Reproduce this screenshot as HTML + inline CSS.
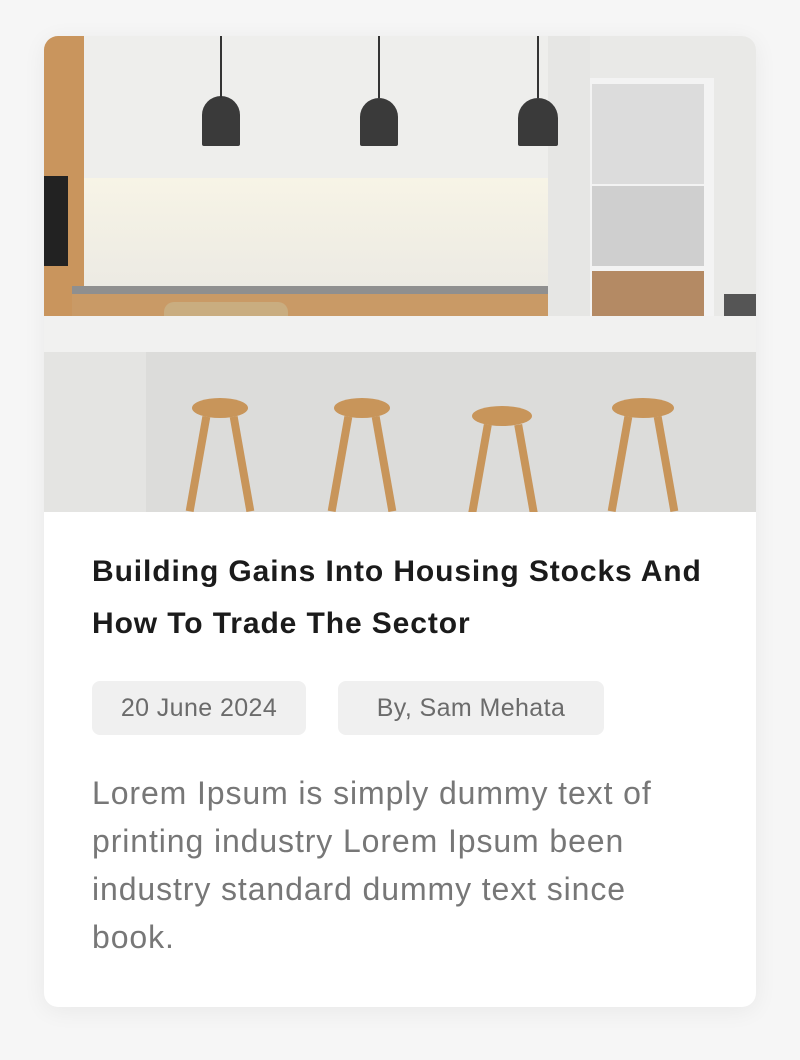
<!DOCTYPE html>
<html><head><style>
*{margin:0;padding:0;box-sizing:border-box}
body{width:800px;height:1060px;background:#f6f6f6;font-family:"Liberation Sans",sans-serif;position:relative;overflow:hidden}
.card{position:absolute;left:44px;top:36px;width:712px;height:971px;background:#fff;border-radius:14px;overflow:hidden;box-shadow:0 4px 24px rgba(0,0,0,0.06)}
.img{position:absolute;left:0;top:0;width:712px;height:476px;background:#e9e9e7;overflow:hidden}
.a{position:absolute}
h1{position:absolute;left:48px;top:510px;width:660px;font-size:30px;line-height:52px;font-weight:bold;color:#1b1b1b;letter-spacing:0.9px;white-space:nowrap}
.tag{position:absolute;top:645px;height:54px;background:#f0f0f0;border-radius:8px;color:#6b6b6b;font-size:25px;line-height:54px;text-align:center;letter-spacing:0.4px}
p{position:absolute;left:48px;top:733px;width:640px;font-size:32px;line-height:48px;color:#777;letter-spacing:0.9px;white-space:nowrap}
</style></head><body>
<div class="card">
<div class="img">
 <div class="a" style="left:0;top:0;width:56px;height:300px;background:#c9955d"></div>
 <div class="a" style="left:0;top:140px;width:24px;height:90px;background:#222"></div>
 <div class="a" style="left:40px;top:0;width:464px;height:142px;background:#eeeeec"></div>
 <div class="a" style="left:40px;top:142px;width:464px;height:110px;background:linear-gradient(#f7f4e6,#eceae3)"></div>
 <div class="a" style="left:28px;top:250px;width:488px;height:30px;background:#c99a66;border-top:8px solid #8f8f8f"></div>
 <div class="a" style="left:504px;top:0;width:42px;height:300px;background:#e6e6e4"></div>
 <div class="a" style="left:546px;top:42px;width:124px;height:260px;background:#f3f3f3"></div>
 <div class="a" style="left:548px;top:48px;width:112px;height:100px;background:#dcdcdc"></div>
 <div class="a" style="left:548px;top:150px;width:112px;height:80px;background:#cfcfcf"></div>
 <div class="a" style="left:548px;top:235px;width:112px;height:60px;background:#b48a64"></div>
 <div class="a" style="left:680px;top:258px;width:32px;height:50px;background:#555"></div>
 <div class="a" style="left:158px;top:60px;width:38px;height:50px;background:#3a3a3a;border-radius:19px 19px 2px 2px"></div>
 <div class="a" style="left:316px;top:62px;width:38px;height:48px;background:#3a3a3a;border-radius:19px 19px 2px 2px"></div>
 <div class="a" style="left:474px;top:62px;width:40px;height:48px;background:#3a3a3a;border-radius:20px 20px 2px 2px"></div>
 <div class="a" style="left:176px;top:0;width:2px;height:62px;background:#333"></div>
 <div class="a" style="left:334px;top:0;width:2px;height:62px;background:#333"></div>
 <div class="a" style="left:493px;top:0;width:2px;height:62px;background:#333"></div>
 <div class="a" style="left:120px;top:266px;width:124px;height:40px;background:#c9ad80;border-radius:10px 10px 20px 20px"></div>
 <div class="a" style="left:0;top:280px;width:712px;height:36px;background:#f1f1f0"></div>
 <div class="a" style="left:0;top:316px;width:102px;height:160px;background:#e4e4e2"></div>
 <div class="a" style="left:102px;top:316px;width:610px;height:160px;background:#dcdcda"></div>
 <div class="a" style="left:148px;top:362px;width:56px;height:20px;background:#c8955a;border-radius:50%"></div>
 <div class="a" style="left:290px;top:362px;width:56px;height:20px;background:#c8955a;border-radius:50%"></div>
 <div class="a" style="left:428px;top:370px;width:60px;height:20px;background:#c8955a;border-radius:50%"></div>
 <div class="a" style="left:568px;top:362px;width:62px;height:20px;background:#c8955a;border-radius:50%"></div>
 <div class="a" style="left:150px;top:380px;width:8px;height:96px;background:#c8955a;transform:rotate(10deg)"></div>
 <div class="a" style="left:194px;top:380px;width:8px;height:96px;background:#c8955a;transform:rotate(-10deg)"></div>
 <div class="a" style="left:292px;top:380px;width:8px;height:96px;background:#c8955a;transform:rotate(10deg)"></div>
 <div class="a" style="left:336px;top:380px;width:8px;height:96px;background:#c8955a;transform:rotate(-10deg)"></div>
 <div class="a" style="left:432px;top:388px;width:8px;height:90px;background:#c8955a;transform:rotate(10deg)"></div>
 <div class="a" style="left:478px;top:388px;width:8px;height:90px;background:#c8955a;transform:rotate(-10deg)"></div>
 <div class="a" style="left:572px;top:380px;width:8px;height:96px;background:#c8955a;transform:rotate(10deg)"></div>
 <div class="a" style="left:618px;top:380px;width:8px;height:96px;background:#c8955a;transform:rotate(-10deg)"></div>
</div>
<h1>Building Gains Into Housing Stocks And<br>How To Trade The Sector</h1>
<div class="tag" style="left:48px;width:214px">20 June 2024</div>
<div class="tag" style="left:294px;width:266px">By, Sam Mehata</div>
<p>Lorem Ipsum is simply dummy text of<br>printing industry Lorem Ipsum been<br>industry standard dummy text since<br>book.</p>
</div>
</body></html>
